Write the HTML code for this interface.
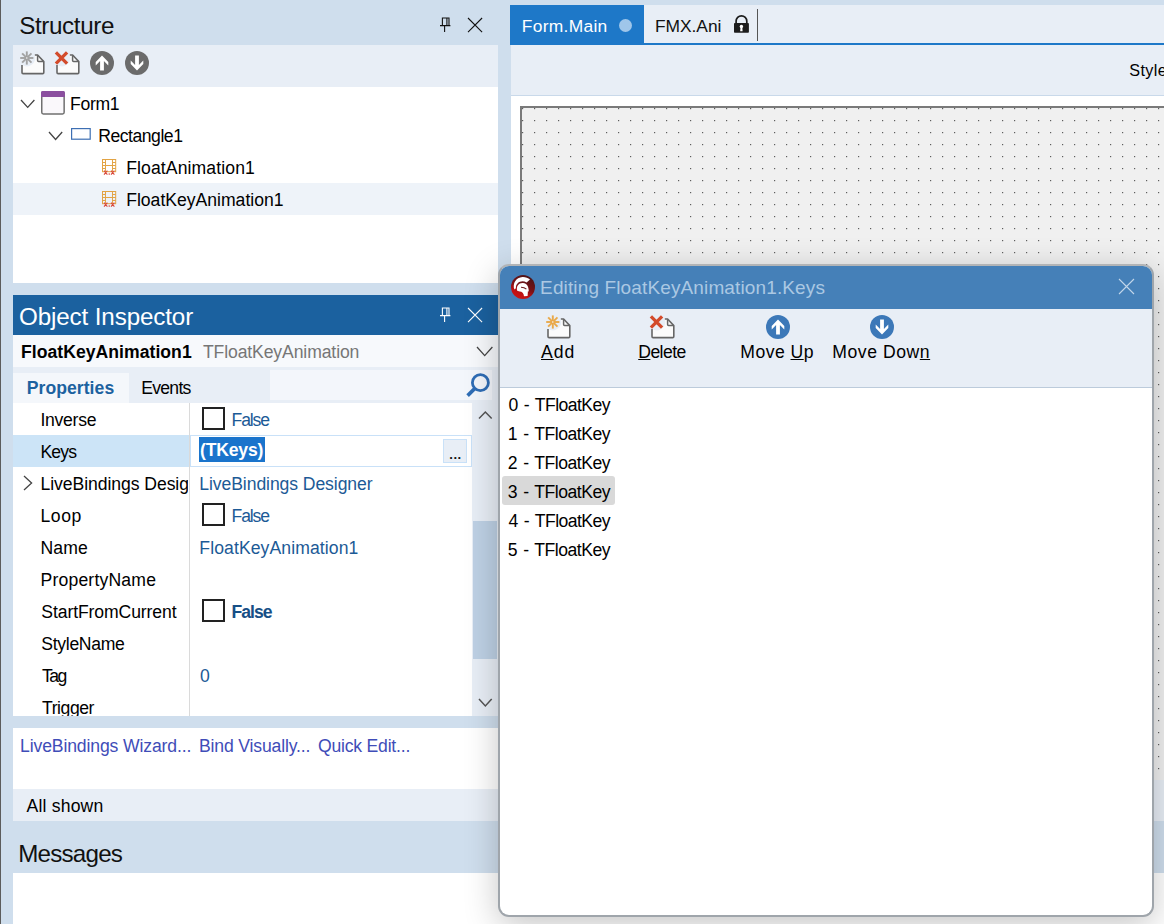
<!DOCTYPE html>
<html><head><meta charset="utf-8"><title>Editing FloatKeyAnimation1.Keys</title>
<style>
html,body{margin:0;padding:0}
body{width:1164px;height:924px;overflow:hidden;position:relative;background:#cfdeed;font-family:"Liberation Sans",sans-serif}
.b{position:absolute;box-sizing:border-box}
.t{position:absolute;white-space:nowrap;display:block}
.t u{text-decoration-thickness:1px;text-underline-offset:1px}
svg{position:absolute;overflow:visible}
</style></head><body>
<!-- left edge -->
<div class="b" style="left:0;top:0;width:1px;height:924px;background:#5c5c5c"></div>

<!-- Structure panel -->
<div class="b" style="left:13px;top:45px;width:485px;height:42px;background:#e8eef6"></div>
<div class="b" style="left:13px;top:87px;width:485px;height:196px;background:#fff"></div>
<div class="b" style="left:13px;top:183px;width:485px;height:32px;background:#eef3f9"></div>

<!-- Object Inspector -->
<div class="b" style="left:13px;top:295px;width:485px;height:40px;background:#1b619f"></div>
<div class="b" style="left:13px;top:335px;width:485px;height:32px;background:#f7f9fc"></div>
<div class="b" style="left:13px;top:367px;width:485px;height:36px;background:#e8eef6"></div>
<div class="b" style="left:13px;top:373px;width:116px;height:30px;background:#f4f7fb"></div>
<div class="b" style="left:270px;top:370px;width:222px;height:30px;background:#f3f6fb"></div>
<div class="b" style="left:13px;top:403px;width:459px;height:313px;background:#fff"></div>
<div class="b" style="left:472px;top:403px;width:26px;height:313px;background:#e8eef6"></div>
<div class="b" style="left:473px;top:521px;width:24px;height:138px;background:#bed1e5"></div>
<div class="b" style="left:13px;top:435px;width:176px;height:32px;background:#cce4f7"></div>
<div class="b" style="left:189px;top:403px;width:1px;height:313px;background:#dadada"></div>
<div class="b" style="left:190px;top:435px;width:282px;height:32px;background:#fff;border:1px solid #c9e1f8"></div>
<div class="b" style="left:199px;top:437px;width:66px;height:24.6px;background:#1a74cc"></div>
<div class="b" style="left:443px;top:439px;width:24px;height:24px;background:#e8eef6;border:1px solid #c9e1f8"></div>
<!-- checkboxes -->
<div class="b" style="left:202px;top:407px;width:23px;height:23px;border:2px solid #222;background:#fff"></div>
<div class="b" style="left:202px;top:503px;width:23px;height:23px;border:2px solid #222;background:#fff"></div>
<div class="b" style="left:202px;top:599px;width:23px;height:23px;border:2px solid #222;background:#fff"></div>

<div class="b" style="left:13px;top:728px;width:485px;height:61px;background:#fff"></div>
<div class="b" style="left:13px;top:789px;width:485px;height:32px;background:#e8eef6"></div>
<div class="b" style="left:13px;top:873px;width:1151px;height:51px;background:#fff"></div>

<!-- editor area -->
<div class="b" style="left:510px;top:5px;width:654px;height:40px;background:#e8eef6"></div>
<div class="b" style="left:510px;top:5px;width:134px;height:40px;background:#1e78c8"></div>
<div class="b" style="left:644px;top:43px;width:520px;height:2px;background:#1e78c8"></div>
<div class="b" style="left:619px;top:19px;width:13px;height:13px;border-radius:50%;background:#9fc6ea"></div>
<div class="b" style="left:757px;top:9px;width:1px;height:32px;background:#555"></div>
<div class="b" style="left:511px;top:45px;width:653px;height:51px;background:#e8eef6;border-bottom:1px solid #c9d9ea"></div>
<div class="b" style="left:511px;top:96px;width:653px;height:684px;background:#fff"></div>
<div class="b" style="left:511px;top:780px;width:653px;height:41px;background:#e8eef6"></div>
<!-- form designer -->
<div class="b" style="left:520px;top:106px;width:660px;height:674px;background:#f0f0f0;border-left:2px solid #7a7a7a;border-top:2px solid #7a7a7a"></div>
<svg style="left:522px;top:108px" width="642" height="672"><defs><pattern id="dots" width="12" height="12" patternUnits="userSpaceOnUse"><rect x="0" y="0" width="1.2" height="1.2" fill="#5e5e5e"/></pattern></defs><rect width="642" height="672" fill="url(#dots)"/></svg>

<svg style="left:21.9px;top:54.800000000000004px" width="21.8" height="18.6" viewBox="0 0 21.8 18.6"><path d="M0 9.77 V17.5 Q0 18.6 1.1 18.6 H20.7 Q21.8 18.6 21.8 17.5 V6.6 L15.6 0 H12.54 A8.3 8.3 0 0 1 0 9.77 Z" fill="#fbfbfb"/><path d="M0 10.07 V17.5 Q0 18.6 1.1 18.6 H20.7 Q21.8 18.6 21.8 17.5 V6.6 L15.6 0 H12.84" fill="none" stroke="#666" stroke-width="1.6" stroke-linejoin="round"/><path d="M15.6 0.3 V5.6 Q15.6 6.6 16.6 6.6 H21.5" fill="none" stroke="#666" stroke-width="1.5"/><line x1="-1.80" y1="3.00" x2="11.40" y2="3.00" stroke="#a2a2a2" stroke-width="1.9"/><line x1="0.13" y1="-1.67" x2="9.47" y2="7.67" stroke="#a2a2a2" stroke-width="1.9"/><line x1="4.80" y1="-3.60" x2="4.80" y2="9.60" stroke="#a2a2a2" stroke-width="1.9"/><line x1="9.47" y1="-1.67" x2="0.13" y2="7.67" stroke="#a2a2a2" stroke-width="1.9"/><circle cx="4.8" cy="3.0" r="0.8" fill="#f6f6f6"/></svg>
<svg style="left:57.300000000000004px;top:54.800000000000004px" width="21.8" height="18.6" viewBox="0 0 21.8 18.6"><path d="M0 9.77 V17.5 Q0 18.6 1.1 18.6 H20.7 Q21.8 18.6 21.8 17.5 V6.6 L15.6 0 H12.54 A8.3 8.3 0 0 1 0 9.77 Z" fill="#fbfbfb"/><path d="M0 10.07 V17.5 Q0 18.6 1.1 18.6 H20.7 Q21.8 18.6 21.8 17.5 V6.6 L15.6 0 H12.84" fill="none" stroke="#666" stroke-width="1.6" stroke-linejoin="round"/><path d="M15.6 0.3 V5.6 Q15.6 6.6 16.6 6.6 H21.5" fill="none" stroke="#666" stroke-width="1.5"/><path d="M-1.0999999999999996 -2.5999999999999996 L10.1 8.6 M10.1 -2.5999999999999996 L-1.0999999999999996 8.6" stroke="#d34b2b" stroke-width="3.3" fill="none"/></svg>
<svg style="left:90px;top:50.9px" width="24" height="24" viewBox="0 0 24 24"><circle cx="12" cy="12" r="12" fill="#6b6b6b"/><polygon points="12,4.6 18.3,10.9 18.3,14.5 13.9,10.1 13.9,19.5 10.1,19.5 10.1,10.1 5.7,14.5 5.7,10.9" fill="#fff"/></svg>
<svg style="left:124.9px;top:50.9px" width="24" height="24" viewBox="0 0 24 24"><circle cx="12" cy="12" r="12" fill="#6b6b6b"/><polygon points="12,19.4 18.3,13.1 18.3,9.5 13.9,13.9 13.9,4.5 10.1,4.5 10.1,13.9 5.7,9.5 5.7,13.1" fill="#fff"/></svg>
<svg style="left:439.9px;top:16.5px" width="10.4" height="15" viewBox="0 0 10.4 15"><path d="M2.4 8.6 V1 H9 V8.6 M0 8.6 H10.4 M4.6 8.6 V15" fill="none" stroke="#111" stroke-width="1.1"/><path d="M6.9 1 V8.6" fill="none" stroke="#111" stroke-width="1.1"/></svg>
<svg style="left:467.9px;top:18px" width="14.1" height="14.1" viewBox="0 0 14.1 14.1"><path d="M0 0 L14.1 14.1 M14.1 0 L0 14.1" stroke="#111" stroke-width="1.1" fill="none"/></svg>
<svg style="left:439.9px;top:307px" width="10.4" height="15" viewBox="0 0 10.4 15"><path d="M2.4 8.6 V1 H9 V8.6 M0 8.6 H10.4 M4.6 8.6 V15" fill="none" stroke="#fff" stroke-width="1.1"/><path d="M6.9 1 V8.6" fill="none" stroke="#fff" stroke-width="1.1"/></svg>
<svg style="left:467.9px;top:308px" width="14.1" height="14.1" viewBox="0 0 14.1 14.1"><path d="M0 0 L14.1 14.1 M14.1 0 L0 14.1" stroke="#fff" stroke-width="1.1" fill="none"/></svg>
<svg style="left:20.8px;top:100.3px" width="13.400000000000002" height="7.400000000000006" viewBox="0 0 13.400000000000002 7.400000000000006"><path d="M0 0 L6.70 7.40 L13.40 0" fill="none" stroke="#444" stroke-width="1.3"/></svg>
<svg style="left:41.1px;top:91px" width="24" height="23.8" viewBox="0 0 24 23.8"><rect x="0.75" y="0.75" width="22.4" height="22.2" rx="1.6" fill="#faf8fb" stroke="#707070" stroke-width="1.5"/><path d="M0 1.6 Q0 0 1.6 0 H22.3 Q23.9 0 23.9 1.6 V5.9 H0 Z" fill="#8b4f9f"/></svg>
<svg style="left:49px;top:132.3px" width="13.200000000000003" height="7.5" viewBox="0 0 13.200000000000003 7.5"><path d="M0 0 L6.60 7.50 L13.20 0" fill="none" stroke="#444" stroke-width="1.3"/></svg>
<svg style="left:71px;top:128.1px" width="19.8" height="11.8" viewBox="0 0 19.8 11.8"><rect x="0.6" y="0.6" width="18.6" height="10.6" fill="#fff" stroke="#3d6fb3" stroke-width="1.2"/></svg>
<svg style="left:102px;top:159px" width="14.2" height="16" viewBox="0 0 14.2 16"><g fill="none" stroke="#e2a445" stroke-width="1"><rect x="0.5" y="0.5" width="13.2" height="12.2"/><path d="M3.5 0.5 V12.7 M10.5 0.5 V12.7 M0.5 3.5 H3.5 M0.5 6.5 H3.5 M0.5 9.5 H3.5 M10.5 3.5 H13.7 M10.5 6.5 H13.7 M10.5 9.5 H13.7 M3.5 6.5 H10.5"/></g><g stroke="#d8483a" stroke-width="1.1" fill="none"><path d="M2 11.6 L5.4 15.6 M5.4 11.6 L2 15.6 M9 11.6 L12.4 15.6 M12.4 11.6 L9 15.6"/></g><rect x="6.6" y="14.4" width="1.3" height="1.3" fill="#d8483a"/></svg>
<svg style="left:102px;top:191px" width="14.2" height="16" viewBox="0 0 14.2 16"><g fill="none" stroke="#e2a445" stroke-width="1"><rect x="0.5" y="0.5" width="13.2" height="12.2"/><path d="M3.5 0.5 V12.7 M10.5 0.5 V12.7 M0.5 3.5 H3.5 M0.5 6.5 H3.5 M0.5 9.5 H3.5 M10.5 3.5 H13.7 M10.5 6.5 H13.7 M10.5 9.5 H13.7 M3.5 6.5 H10.5"/></g><g stroke="#d8483a" stroke-width="1.1" fill="none"><path d="M2 11.6 L5.4 15.6 M5.4 11.6 L2 15.6 M9 11.6 L12.4 15.6 M12.4 11.6 L9 15.6"/></g><rect x="6.6" y="14.4" width="1.3" height="1.3" fill="#d8483a"/></svg>
<svg style="left:476.8px;top:347.1px" width="15.399999999999977" height="8.599999999999966" viewBox="0 0 15.399999999999977 8.599999999999966"><path d="M0 0 L7.70 8.60 L15.40 0" fill="none" stroke="#444" stroke-width="1.3"/></svg>
<svg style="left:466px;top:372.6px" width="24" height="24" viewBox="0 0 24 24"><circle cx="14.4" cy="9.7" r="8" fill="none" stroke="#2f6db5" stroke-width="2.8"/><path d="M8.9 15.4 L1.6 22.6" stroke="#2f6db5" stroke-width="3.6" fill="none"/></svg>
<svg style="left:479px;top:412.3px" width="12.699999999999989" height="6.5" viewBox="0 0 12.699999999999989 6.5"><path d="M0 6.50 L6.35 0 L12.70 6.50" fill="none" stroke="#555" stroke-width="1.5"/></svg>
<svg style="left:479px;top:699px" width="12.699999999999989" height="7" viewBox="0 0 12.699999999999989 7"><path d="M0 0 L6.35 7.00 L12.70 0" fill="none" stroke="#555" stroke-width="1.5"/></svg>
<svg style="left:24px;top:476px" width="7.600000000000001" height="14" viewBox="0 0 7.600000000000001 14"><path d="M0 0 L7.60 7.00 L0 14.00" fill="none" stroke="#444" stroke-width="1.3"/></svg>
<svg style="left:734px;top:15px" width="15" height="18" viewBox="0 0 15 18"><path d="M2.1 8.5 V6.2 A5.35 5.35 0 0 1 12.8 6.2 V8.5" fill="none" stroke="#1c1c1c" stroke-width="1.7"/><rect x="0" y="8.1" width="14.9" height="9.7" rx="0.8" fill="#1c1c1c"/><circle cx="7.4" cy="11.4" r="1.7" fill="#fff"/><path d="M6.5 12 L6.2 16.2 H8.6 L8.3 12 Z" fill="#fff"/></svg>
<span class="t" style="left:19.20px;top:2.4px;font-size:24.2px;line-height:48.4px;color:#111;letter-spacing:-0.368px;">Structure</span>
<span class="t" style="left:70.08px;top:86.9px;font-size:17.6px;line-height:35.2px;color:#000;letter-spacing:-0.326px;">Form1</span>
<span class="t" style="left:98.20px;top:118.9px;font-size:17.6px;line-height:35.2px;color:#000;letter-spacing:-0.473px;">Rectangle1</span>
<span class="t" style="left:126.20px;top:150.9px;font-size:17.6px;line-height:35.2px;color:#000;letter-spacing:0.107px;">FloatAnimation1</span>
<span class="t" style="left:126.20px;top:182.9px;font-size:17.6px;line-height:35.2px;color:#000;letter-spacing:-0.008px;">FloatKeyAnimation1</span>
<span class="t" style="left:18.98px;top:292.6px;font-size:24.2px;line-height:48.4px;color:#fff;letter-spacing:-0.123px;">Object Inspector</span>
<span class="t" style="left:20.98px;top:335.4px;font-size:17.6px;line-height:35.2px;color:#000;font-weight:bold;letter-spacing:0.037px;">FloatKeyAnimation1</span>
<span class="t" style="left:202.90px;top:335.4px;font-size:17.6px;line-height:35.2px;color:#767676;letter-spacing:-0.113px;">TFloatKeyAnimation</span>
<span class="t" style="left:26.76px;top:371.4px;font-size:17.6px;line-height:35.2px;color:#1c62a0;font-weight:bold;letter-spacing:0.043px;">Properties</span>
<span class="t" style="left:141.20px;top:371.4px;font-size:17.6px;line-height:35.2px;color:#000;letter-spacing:-0.719px;">Events</span>
<span class="t" style="left:40.52px;top:402.9px;font-size:17.6px;line-height:35.2px;color:#000;letter-spacing:-0.287px;">Inverse</span>
<span class="t" style="left:40.52px;top:434.9px;font-size:17.6px;line-height:35.2px;color:#000;letter-spacing:-0.895px;">Keys</span>
<span class="t" style="left:40.52px;top:466.9px;font-size:17.6px;line-height:35.2px;color:#000;letter-spacing:-0.068px;width:147px;overflow:hidden;">LiveBindings Designer</span>
<span class="t" style="left:40.52px;top:498.9px;font-size:17.6px;line-height:35.2px;color:#000;letter-spacing:0.540px;">Loop</span>
<span class="t" style="left:40.52px;top:530.9px;font-size:17.6px;line-height:35.2px;color:#000;letter-spacing:0.127px;">Name</span>
<span class="t" style="left:40.52px;top:562.9px;font-size:17.6px;line-height:35.2px;color:#000;letter-spacing:0.182px;">PropertyName</span>
<span class="t" style="left:41.32px;top:594.9px;font-size:17.6px;line-height:35.2px;color:#000;letter-spacing:-0.106px;">StartFromCurrent</span>
<span class="t" style="left:41.32px;top:626.9px;font-size:17.6px;line-height:35.2px;color:#000;letter-spacing:-0.316px;">StyleName</span>
<span class="t" style="left:42.12px;top:658.9px;font-size:17.6px;line-height:35.2px;color:#000;letter-spacing:-1.547px;">Tag</span>
<span class="t" style="left:42.12px;top:690.9px;font-size:17.6px;line-height:35.2px;color:#000;letter-spacing:-0.470px;">Trigger</span>
<span class="t" style="left:231.52px;top:402.9px;font-size:17.6px;line-height:35.2px;color:#1c5a96;letter-spacing:-1.123px;">False</span>
<span class="t" style="left:199.98px;top:433.2px;font-size:17.6px;line-height:35.2px;color:#fff;font-weight:bold;letter-spacing:-0.185px;">(TKeys)</span>
<span class="t" style="left:199.30px;top:466.9px;font-size:17.6px;line-height:35.2px;color:#1c5a96;letter-spacing:-0.088px;">LiveBindings Designer</span>
<span class="t" style="left:231.52px;top:498.9px;font-size:17.6px;line-height:35.2px;color:#1c5a96;letter-spacing:-1.123px;">False</span>
<span class="t" style="left:199.30px;top:530.9px;font-size:17.6px;line-height:35.2px;color:#1c5a96;letter-spacing:0.097px;">FloatKeyAnimation1</span>
<span class="t" style="left:231.52px;top:594.9px;font-size:17.6px;line-height:35.2px;color:#174f86;font-weight:bold;letter-spacing:-1.005px;">False</span>
<span class="t" style="left:200.10px;top:658.9px;font-size:17.6px;line-height:35.2px;color:#1c5a96;letter-spacing:-0.397px;">0</span>
<span class="t" style="left:449.32px;top:442.3px;font-size:13px;line-height:26px;color:#111;font-weight:bold;letter-spacing:0.458px;">...</span>
<span class="t" style="left:20.08px;top:728.9px;font-size:17.6px;line-height:35.2px;color:#3f4db8;letter-spacing:-0.130px;">LiveBindings Wizard...</span>
<span class="t" style="left:198.96px;top:728.9px;font-size:17.6px;line-height:35.2px;color:#3f4db8;letter-spacing:-0.155px;">Bind Visually...</span>
<span class="t" style="left:317.98px;top:728.9px;font-size:17.6px;line-height:35.2px;color:#3f4db8;letter-spacing:-0.210px;">Quick Edit...</span>
<span class="t" style="left:26.56px;top:789.4px;font-size:17.6px;line-height:35.2px;color:#000;letter-spacing:0.178px;">All shown</span>
<span class="t" style="left:18.18px;top:830.3px;font-size:24.2px;line-height:48.4px;color:#111;letter-spacing:-0.781px;">Messages</span>
<span class="t" style="left:521.86px;top:8.8px;font-size:17.4px;line-height:34.8px;color:#fff;letter-spacing:0.291px;">Form.Main</span>
<span class="t" style="left:654.98px;top:8.8px;font-size:17.4px;line-height:34.8px;color:#111;letter-spacing:-0.041px;">FMX.Ani</span>
<span class="t" style="left:1129.32px;top:54.3px;font-size:16.2px;line-height:32.4px;color:#000;letter-spacing:0.350px;">Style</span>
<div class="b" style="left:13px;top:716px;width:485px;height:12px;background:#cfdeed"></div>
<!-- dialog -->
<div class="b" id="dlg" style="left:498px;top:264px;width:656px;height:653px;border-radius:11px;background:#fff;border:2px solid #9fa5ab;border-top-color:#b2b4b6;box-shadow:0 8px 34px rgba(0,0,0,.23);overflow:hidden">
  <div class="b" style="left:0;top:0;width:100%;height:43px;background:#4580b8"></div>
  <div class="b" style="left:0;top:43px;width:100%;height:79px;background:#e8eef6;border-bottom:1px solid #bccbdb"></div>
  <div class="b" style="left:2px;top:210px;width:113px;height:29px;border-radius:3px;background:#d9d9d9"></div>
</div>

<svg style="left:511px;top:274.9px" width="24" height="24" viewBox="0 0 24 24"><defs><linearGradient id="lg" x1="0.75" y1="0.1" x2="0.35" y2="0.95"><stop offset="0" stop-color="#4f1519"/><stop offset="0.5" stop-color="#7a1216"/><stop offset="0.8" stop-color="#c01012"/><stop offset="1" stop-color="#c81414"/></linearGradient></defs><circle cx="12" cy="12" r="12" fill="url(#lg)"/><path d="M3.4 14.6 C1.2 8.5 5 2.2 11.5 1.9 C14.5 1.8 17 2.6 19 4.6 L15.6 7.4 C10.5 4.5 4.6 7.5 4.9 13.2 Z" fill="#fff"/><path d="M6.2 15.8 C4.8 11 8.2 7.6 12 8 C16 8.4 17.8 11.5 17.8 16.6 L16.9 16.2 L16.6 21 L13 21.3 C12.8 18.5 11 16.6 8.6 16.6 Z" fill="#fff"/><path d="M10 12.2 C12 12.2 14 12.8 15.4 14.2" stroke="#6b1a1e" stroke-width="1.1" fill="none"/></svg>
<svg style="left:1119px;top:279px" width="15" height="15" viewBox="0 0 15 15"><path d="M0 0 L15 15 M15 0 L0 15" stroke="#c3d6ea" stroke-width="1.1" fill="none"/></svg>
<svg style="left:548.2px;top:318.7px" width="21.8" height="18.6" viewBox="0 0 21.8 18.6"><path d="M0 9.77 V17.5 Q0 18.6 1.1 18.6 H20.7 Q21.8 18.6 21.8 17.5 V6.6 L15.6 0 H12.54 A8.3 8.3 0 0 1 0 9.77 Z" fill="#fbfbfb"/><path d="M0 10.07 V17.5 Q0 18.6 1.1 18.6 H20.7 Q21.8 18.6 21.8 17.5 V6.6 L15.6 0 H12.84" fill="none" stroke="#666" stroke-width="1.6" stroke-linejoin="round"/><path d="M15.6 0.3 V5.6 Q15.6 6.6 16.6 6.6 H21.5" fill="none" stroke="#666" stroke-width="1.5"/><line x1="-1.80" y1="3.00" x2="11.40" y2="3.00" stroke="#e9a94a" stroke-width="1.9"/><line x1="0.13" y1="-1.67" x2="9.47" y2="7.67" stroke="#e9a94a" stroke-width="1.9"/><line x1="4.80" y1="-3.60" x2="4.80" y2="9.60" stroke="#e9a94a" stroke-width="1.9"/><line x1="9.47" y1="-1.67" x2="0.13" y2="7.67" stroke="#e9a94a" stroke-width="1.9"/><circle cx="4.8" cy="3.0" r="0.8" fill="#f6f6f6"/></svg>
<svg style="left:651.7px;top:318.7px" width="21.8" height="18.6" viewBox="0 0 21.8 18.6"><path d="M0 9.77 V17.5 Q0 18.6 1.1 18.6 H20.7 Q21.8 18.6 21.8 17.5 V6.6 L15.6 0 H12.54 A8.3 8.3 0 0 1 0 9.77 Z" fill="#fbfbfb"/><path d="M0 10.07 V17.5 Q0 18.6 1.1 18.6 H20.7 Q21.8 18.6 21.8 17.5 V6.6 L15.6 0 H12.84" fill="none" stroke="#666" stroke-width="1.6" stroke-linejoin="round"/><path d="M15.6 0.3 V5.6 Q15.6 6.6 16.6 6.6 H21.5" fill="none" stroke="#666" stroke-width="1.5"/><path d="M-1.0999999999999996 -2.5999999999999996 L10.1 8.6 M10.1 -2.5999999999999996 L-1.0999999999999996 8.6" stroke="#d34b2b" stroke-width="3.3" fill="none"/></svg>
<svg style="left:766px;top:315px" width="24" height="24" viewBox="0 0 24 24"><circle cx="12" cy="12" r="12" fill="#3c78b8"/><polygon points="12,4.6 18.3,10.9 18.3,14.5 13.9,10.1 13.9,19.5 10.1,19.5 10.1,10.1 5.7,14.5 5.7,10.9" fill="#fff"/></svg>
<svg style="left:870px;top:315px" width="24" height="24" viewBox="0 0 24 24"><circle cx="12" cy="12" r="12" fill="#3c78b8"/><polygon points="12,19.4 18.3,13.1 18.3,9.5 13.9,13.9 13.9,4.5 10.1,4.5 10.1,13.9 5.7,9.5 5.7,13.1" fill="#fff"/></svg>
<span class="t" style="left:540.08px;top:268.8px;font-size:19px;line-height:38px;color:#abc8e3;letter-spacing:0.131px;">Editing FloatKeyAnimation1.Keys</span>
<span class="t" style="left:541.00px;top:334.5px;font-size:17.6px;line-height:35.2px;color:#000;letter-spacing:1.036px;"><u>A</u>dd</span>
<span class="t" style="left:638.24px;top:334.5px;font-size:17.6px;line-height:35.2px;color:#000;letter-spacing:-0.567px;"><u>D</u>elete</span>
<span class="t" style="left:740.30px;top:334.5px;font-size:17.6px;line-height:35.2px;color:#000;letter-spacing:0.460px;">Move <u>U</u>p</span>
<span class="t" style="left:832.30px;top:334.5px;font-size:17.6px;line-height:35.2px;color:#000;letter-spacing:0.549px;">Move Dow<u>n</u></span>
<span class="t" style="left:508.56px;top:387.9px;font-size:17.6px;line-height:35.2px;color:#000;letter-spacing:-0.562px;word-spacing:1.7px;">0 - TFloatKey</span>
<span class="t" style="left:507.76px;top:416.9px;font-size:17.6px;line-height:35.2px;color:#000;letter-spacing:-0.496px;word-spacing:1.7px;">1 - TFloatKey</span>
<span class="t" style="left:507.76px;top:445.9px;font-size:17.6px;line-height:35.2px;color:#000;letter-spacing:-0.496px;word-spacing:1.7px;">2 - TFloatKey</span>
<span class="t" style="left:507.76px;top:474.9px;font-size:17.6px;line-height:35.2px;color:#000;letter-spacing:-0.496px;word-spacing:1.7px;">3 - TFloatKey</span>
<span class="t" style="left:508.56px;top:503.9px;font-size:17.6px;line-height:35.2px;color:#000;letter-spacing:-0.562px;word-spacing:1.7px;">4 - TFloatKey</span>
<span class="t" style="left:507.76px;top:532.9px;font-size:17.6px;line-height:35.2px;color:#000;letter-spacing:-0.496px;word-spacing:1.7px;">5 - TFloatKey</span>
</body></html>
